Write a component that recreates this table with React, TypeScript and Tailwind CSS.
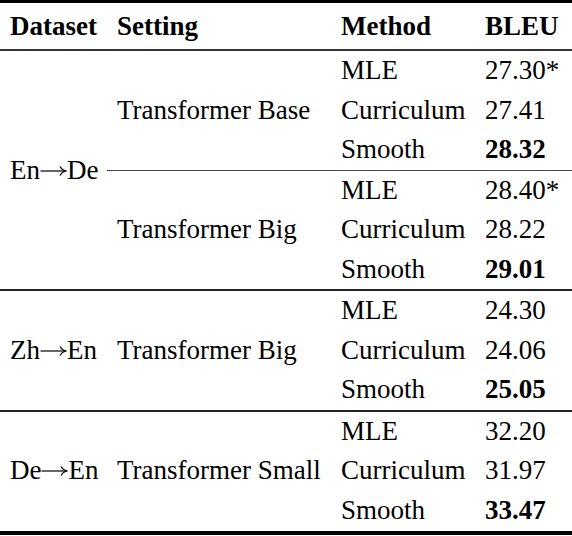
const groups = [
  {
    from: "En",
    to: "De",
    settings: [
      {
        name: "Transformer Base",
        rows: [
          { method: "MLE", bleu: "27.30*", best: false },
          { method: "Curriculum", bleu: "27.41", best: false },
          { method: "Smooth", bleu: "28.32", best: true },
        ],
      },
      {
        name: "Transformer Big",
        rows: [
          { method: "MLE", bleu: "28.40*", best: false },
          { method: "Curriculum", bleu: "28.22", best: false },
          { method: "Smooth", bleu: "29.01", best: true },
        ],
      },
    ],
  },
  {
    from: "Zh",
    to: "En",
    settings: [
      {
        name: "Transformer Big",
        rows: [
          { method: "MLE", bleu: "24.30", best: false },
          { method: "Curriculum", bleu: "24.06", best: false },
          { method: "Smooth", bleu: "25.05", best: true },
        ],
      },
    ],
  },
  {
    from: "De",
    to: "En",
    settings: [
      {
        name: "Transformer Small",
        rows: [
          { method: "MLE", bleu: "32.20", best: false },
          { method: "Curriculum", bleu: "31.97", best: false },
          { method: "Smooth", bleu: "33.47", best: true },
        ],
      },
    ],
  },
];

// thin math-style right arrow
function Arrow() {
  return (
    <svg width="27" height="12" viewBox="0 0 27 12" className="mt-[1px] shrink-0" aria-label="→">
      <path d="M0.5 6H25.5" stroke="black" strokeWidth="1.2" fill="none" />
      <path d="M20 1.5C21 3.6 23 5.2 26 6C23 6.8 21 8.4 20 10.5" stroke="black" strokeWidth="1.1" fill="none" />
    </svg>
  );
}

export default function App() {
  return (
    <div className="h-[536px] w-[572px] bg-white text-[27px] leading-none text-black [font-family:'Liberation_Serif','Times_New_Roman',serif]">
      <div className="h-[3px] bg-black" />
      <div className="flex h-[46px] items-center font-bold">
        <div className="w-[107px] pl-[10px]">Dataset</div>
        <div className="w-[224px] pl-[10px]">Setting</div>
        <div className="w-[144px] pl-[10px]">Method</div>
        <div className="w-[97px] pl-[10px]">BLEU</div>
      </div>
      <div className="h-[2px] bg-[#333]" />
      {groups.map((group, gi) => (
        <div key={group.from + group.to}>
          {gi > 0 && <div className="h-[2px] bg-[#222]" />}
          <div className="flex">
            <div className="flex w-[107px] items-center pl-[10px]">
              <span>{group.from}</span>
              <Arrow />
              <span>{group.to}</span>
            </div>
            <div className="flex flex-1 flex-col">
              {group.settings.map((setting, si) => (
                <div key={setting.name}>
                  {si > 0 && <div className="h-px bg-[#444]" />}
                  <div className="flex">
                    <div className="flex w-[224px] items-center pl-[10px]">{setting.name}</div>
                    <div className="flex flex-col">
                      {setting.rows.map((row) => (
                        <div key={row.method} className="flex h-[39.5px] items-center">
                          <div className="w-[144px] pl-[10px]">{row.method}</div>
                          <div className={`w-[97px] pl-[10px] ${row.best ? "font-bold" : ""}`}>{row.bleu}</div>
                        </div>
                      ))}
                    </div>
                  </div>
                </div>
              ))}
            </div>
          </div>
        </div>
      ))}
      <div className="mt-px h-[4px] bg-black" />
    </div>
  );
}
